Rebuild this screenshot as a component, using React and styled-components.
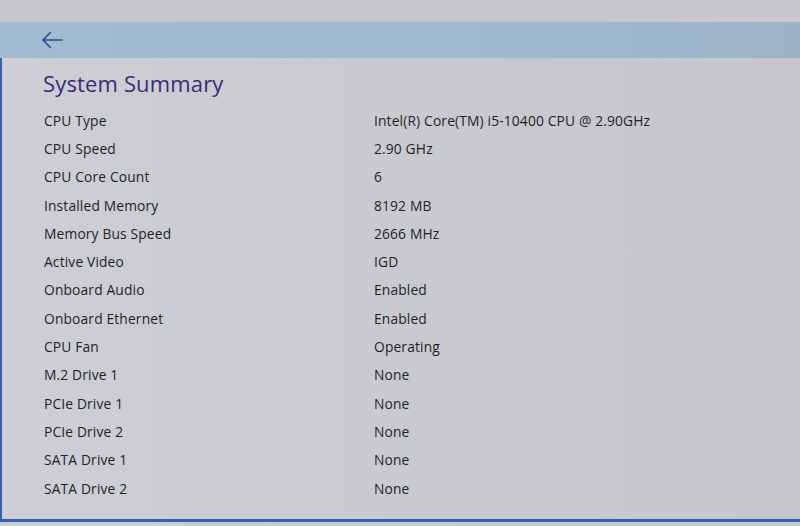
import styled, { createGlobalStyle } from "styled-components";

const GlobalStyle = createGlobalStyle`
  html, body {
    margin: 0;
    padding: 0;
    background: #c9cacf;
  }
  body {
    font-family: "Open Sans", "Noto Sans", sans-serif;
  }
`;

const rows = [
  ["CPU Type", "Intel(R) Core(TM) i5-10400 CPU @ 2.90GHz"],
  ["CPU Speed", "2.90 GHz"],
  ["CPU Core Count", "6"],
  ["Installed Memory", "8192 MB"],
  ["Memory Bus Speed", "2666 MHz"],
  ["Active Video", "IGD"],
  ["Onboard Audio", "Enabled"],
  ["Onboard Ethernet", "Enabled"],
  ["CPU Fan", "Operating"],
  ["M.2 Drive 1", "None"],
  ["PCIe Drive 1", "None"],
  ["PCIe Drive 2", "None"],
  ["SATA Drive 1", "None"],
  ["SATA Drive 2", "None"],
];

const App = () => {
  return (
    <>
      <GlobalStyle />
      <Screen>
        <TopStrip />
        <NavBar>
          <BackButton aria-label="Back">
            <svg width="22" height="18" viewBox="0 0 22 18" fill="none">
              <path
                d="M21 9H2M9.5 1.5L2 9l7.5 7.5"
                stroke="#2b4f8c"
                strokeWidth="1.6"
                strokeLinecap="round"
                strokeLinejoin="round"
              />
            </svg>
          </BackButton>
        </NavBar>
        <Panel>
          <Title>System Summary</Title>
          <InfoList>
            {rows.map(([label, value]) => (
              <InfoRow key={label}>
                <Label>{label}</Label>
                <Value>{value}</Value>
              </InfoRow>
            ))}
          </InfoList>
        </Panel>
      </Screen>
    </>
  );
};

export default App;

const Screen = styled.div`
  width: 800px;
  height: 526px;
  display: flex;
  flex-direction: column;
  overflow: hidden;
  background: linear-gradient(90deg, #cdcfd4 0%, #c9cacf 50%, #c6c7cc 100%);
`;

const TopStrip = styled.div`
  height: 22px;
  background: #c8c8cc;
`;

const NavBar = styled.div`
  height: 36px;
  display: flex;
  align-items: center;
  padding-left: 41px;
  background: linear-gradient(90deg, #a2bccf 0%, #9fb8cb 60%, #9cb3c6 100%);
`;

const BackButton = styled.div`
  display: flex;
  align-items: center;
  width: 22px;
  height: 18px;
`;

const Panel = styled.div`
  flex: 1;
  display: flex;
  flex-direction: column;
  border-left: 2px solid #2f62b4;
  border-bottom: 3px solid #2f62b4;
  margin-bottom: 4px;
  padding: 10px 0 0 41px;
`;

const Title = styled.h1`
  margin: 0;
  font-size: 22px;
  line-height: 30px;
  font-weight: 400;
  color: #3b2a7a;
  letter-spacing: 0.15px;
`;

const InfoList = styled.div`
  display: flex;
  flex-direction: column;
  margin-top: 8px;
`;

const InfoRow = styled.div`
  display: grid;
  grid-template-columns: 331px 1fr;
  align-items: center;
  height: 28.3px;
  font-size: 13.8px;
  letter-spacing: 0.15px;
  color: #1f1f24;
`;

const Label = styled.span`
  padding-left: 1px;
`;

const Value = styled.span``;
